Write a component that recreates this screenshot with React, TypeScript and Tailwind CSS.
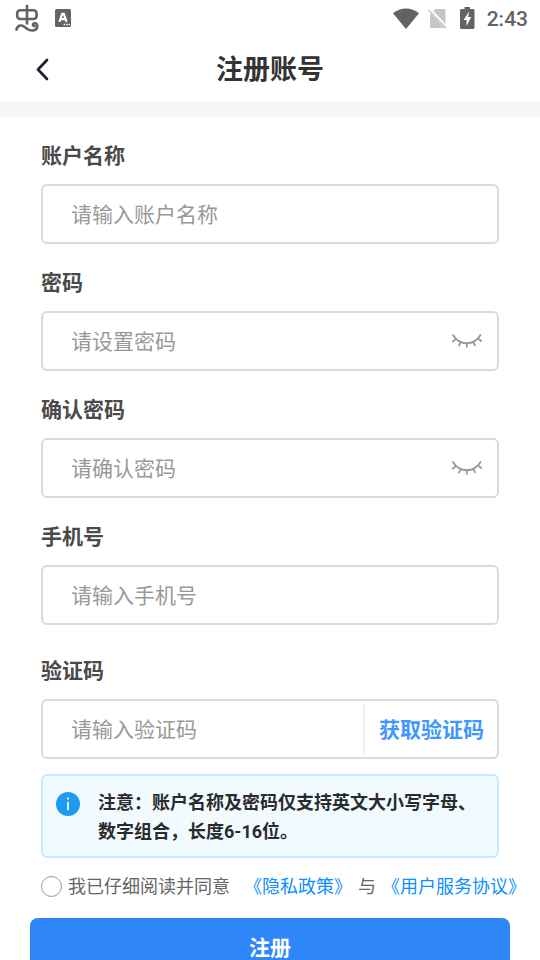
import type { ReactNode } from "react";

const inputClass =
  "h-full min-w-0 flex-1 bg-transparent pt-0.5 text-[21px] text-[#333333] outline-none placeholder:text-[#999999]";

function StatusBar() {
  return (
    <div className="flex h-9 items-center justify-between px-3 text-[#636363]">
      <div className="flex items-center gap-[15px]">
        <svg width="28" height="28" viewBox="0 0 28 28" fill="none" stroke="currentColor" strokeWidth="2.6" strokeLinecap="round" aria-hidden="true">
          <rect x="5.2" y="6.2" width="19.4" height="8.8" rx="3" />
          <path d="M15 2V19.4" />
          <path d="M4.4 25.6C5.8 20.8 10 20.4 13.2 23.4C17.5 27.5 24 27.8 25.2 23.2C25.9 20.4 24.2 18.8 22.3 19.3C20.4 19.8 20.6 22.3 22.5 22" />
        </svg>
        <svg width="16" height="18" viewBox="0 0 16 18" aria-hidden="true">
          <rect width="16" height="18" rx="1.5" fill="currentColor" />
          <path d="M4.4 12.8L7.2 4.8H8.8L11.6 12.8M5.6 10.2H10.4" fill="none" stroke="white" strokeWidth="2.2" />
          <path d="M8.6 15.6h1.6M11.2 15.6h1.6M13.6 15.6h1.4" stroke="white" strokeWidth="1.5" />
        </svg>
      </div>
      <div className="flex items-center">
        <svg width="26" height="21" viewBox="0 0 26 21" aria-hidden="true">
          <path d="M0 5.2C7.5-1.2 18.5-1.2 26 5.2L13 21Z" fill="currentColor" />
        </svg>
        <svg width="21" height="21" viewBox="0 0 21 21" className="ml-2" aria-hidden="true">
          <path d="M8.5 1H17Q18.5 1 18.5 2.5V20H4.5Q3 20 3 18.5V6.5Z" fill="#c6c6c6" />
          <path d="M1.5 .5L20 20" stroke="white" strokeWidth="3.6" />
          <path d="M1.2 1.8L19.2 20.4" stroke="#c6c6c6" strokeWidth="1.6" />
        </svg>
        <svg width="15" height="22" viewBox="0 0 15 22" className="ml-3" aria-hidden="true">
          <path d="M4.5 0H10V2H13Q14.5 2 14.5 3.5V20.5Q14.5 22 13 22H1.5Q0 22 0 20.5V3.5Q0 2 1.5 2H4.5Z" fill="currentColor" />
          <path d="M9 4.5L3.6 13H6.5V19L11.2 10H8.2Z" fill="white" />
        </svg>
        <span className="ml-3 pt-0.5 font-['Roboto',sans-serif] text-[21px] leading-6 font-medium">2:43</span>
      </div>
    </div>
  );
}

function ClosedEye() {
  return (
    <svg width="32" height="16" viewBox="0 0 32 16" fill="none" stroke="#999999" strokeWidth="1.8" strokeLinecap="round" aria-hidden="true">
      <path d="M2 2C8.5 13 23 13 29.5 2" />
      <path d="M5 5.8L1.8 8.6M9.6 9.4L8 12.6M15.8 10.4V13.8M22.2 9.2L24 12.2M27 5.4L30.2 8" />
    </svg>
  );
}

function Field({ id, label, type = "text", placeholder, children }: { id: string; label: string; type?: string; placeholder: string; children?: ReactNode }) {
  return (
    <div>
      <label htmlFor={id} className="block text-[21px] leading-8 font-bold text-[#4a4a4a]">
        {label}
      </label>
      <div className="mt-3 flex h-[60px] items-center rounded-md border-2 border-[#dadada] bg-white pl-7">
        <input id={id} type={type} placeholder={placeholder} className={inputClass} />
        {children}
      </div>
    </div>
  );
}

export default function App() {
  return (
    <div className="h-screen overflow-hidden bg-white font-['Roboto','Noto_Sans_CJK_SC',sans-serif]" lang="zh-CN">
      <StatusBar />
      <header className="grid h-[66px] grid-cols-[1fr_auto_1fr] items-center px-8">
        <button type="button" aria-label="返回" className="justify-self-start">
          <svg width="20" height="24" viewBox="0 0 20 24" fill="none" stroke="#1c1c2c" strokeWidth="2.6" strokeLinecap="round" strokeLinejoin="round" aria-hidden="true">
            <path d="M15 3L6 12.5L15 22" />
          </svg>
        </button>
        <h1 className="pt-0.5 text-[27px] leading-10 font-bold text-[#333333]">注册账号</h1>
      </header>
      <div className="h-[15px] bg-[#f6f6f6]" />
      <form>
        <div className="px-[41px] pt-[23px]">
          <div className="flex flex-col gap-[23px]">
            <Field id="account" label="账户名称" placeholder="请输入账户名称" />
            <Field id="password" label="密码" type="password" placeholder="请设置密码">
              <button type="button" aria-label="显示密码" className="mr-3.5">
                <ClosedEye />
              </button>
            </Field>
            <Field id="confirm" label="确认密码" type="password" placeholder="请确认密码">
              <button type="button" aria-label="显示密码" className="mr-3.5">
                <ClosedEye />
              </button>
            </Field>
            <Field id="phone" label="手机号" type="tel" placeholder="请输入手机号" />
          </div>
          <div className="mt-[30px]">
            <Field id="code" label="验证码" placeholder="请输入验证码">
              <div className="h-[51px] w-0.5 bg-[#eeeeee]" />
              <button type="button" className="pt-0.5 pr-[13px] pl-3.5 text-[21px] leading-8 font-bold text-[#4098ff]">
                获取验证码
              </button>
            </Field>
          </div>
          <div className="mt-[15px] flex rounded-md border-2 border-[#c8eafe] bg-[#f1faff] pt-3 pr-3 pb-2.5 pl-[13px]">
            <svg width="24" height="24" viewBox="0 0 24 24" className="mt-1 shrink-0" aria-hidden="true">
              <circle cx="12" cy="12" r="12" fill="#1c9bf0" />
              <path d="M12 9.8V18.2M12 5.6V7.6" stroke="white" strokeWidth="1.7" />
            </svg>
            <p className="ml-[18px] text-[18px] leading-[29px] font-bold text-[#2b2b2b]">
              注意：账户名称及密码仅支持英文大小写字母、数字组合，长度6-16位。
            </p>
          </div>
        </div>
        <div className="mt-[13px] flex items-center pl-[41px] text-[18px] leading-7 whitespace-nowrap text-[#666666]">
          <input id="agree" type="radio" className="size-[21px] shrink-0 appearance-none rounded-full border border-[#999999] checked:border-[6px] checked:border-[#2f86f8]" />
          <label htmlFor="agree" className="ml-1.5 pt-0.5">
            我已仔细阅读并同意
          </label>
          <a href="#privacy" className="ml-3.5 pt-0.5 text-[#0a90ff]">
            《隐私政策》
          </a>
          <span className="mx-1.5 pt-0.5">与</span>
          <a href="#terms" className="pt-0.5 text-[#0a90ff]">
            《用户服务协议》
          </a>
        </div>
        <div className="mt-[17px] px-[30px]">
          <button type="submit" className="h-[60px] w-full rounded-lg bg-[#2f86f8] pt-0.5 text-[21px] font-bold text-white">
            注册
          </button>
        </div>
      </form>
    </div>
  );
}
